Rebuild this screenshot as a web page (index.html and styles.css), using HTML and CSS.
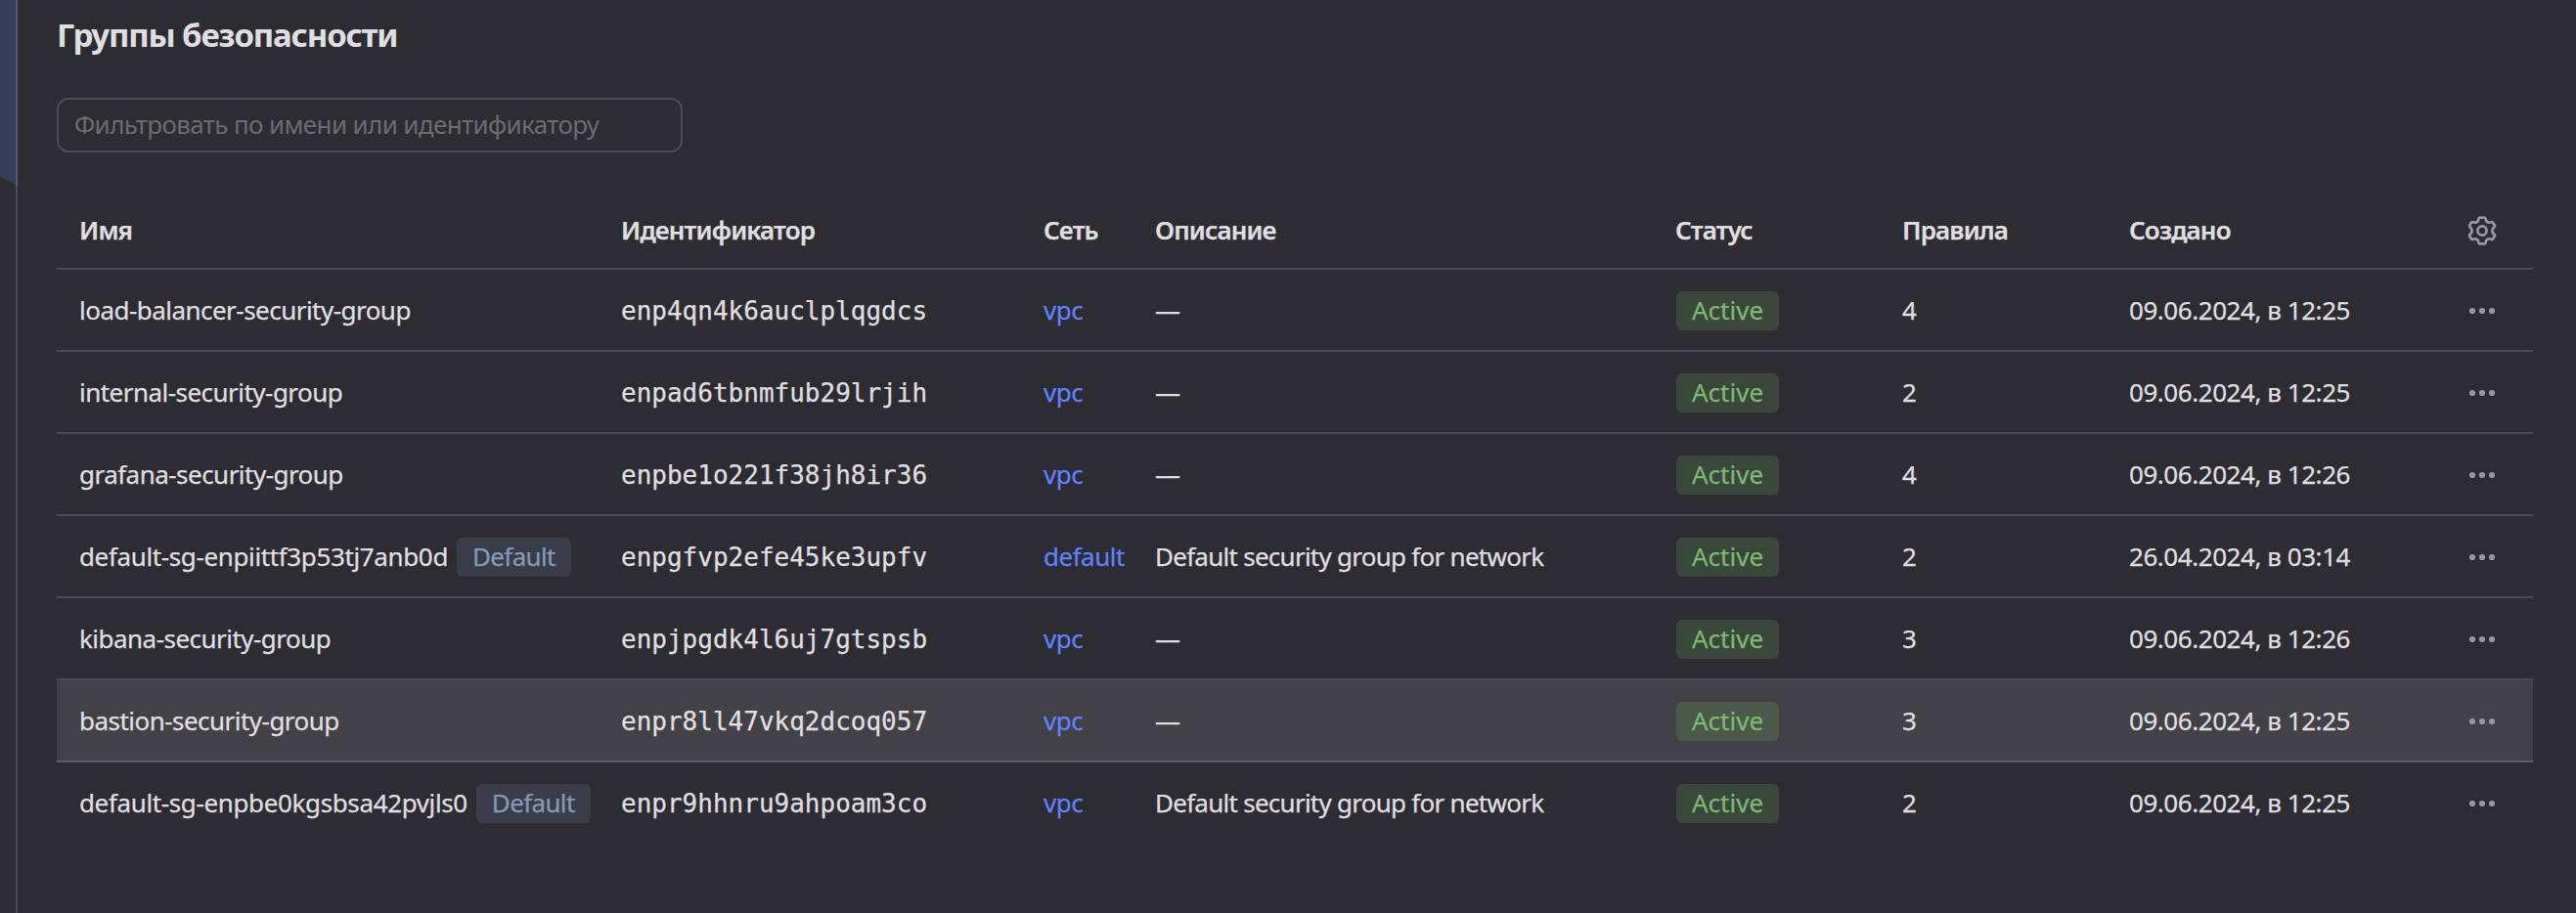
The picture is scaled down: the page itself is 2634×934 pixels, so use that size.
FILE: index.html
```html
<!DOCTYPE html>
<html lang="ru">
<head>
<meta charset="utf-8">
<title>Группы безопасности</title>
<link rel="stylesheet" href="styles.css">
</head>
<body>
<svg class="defs" width="0" height="0">
<symbol id="dots" viewBox="0 0 32 32"><circle cx="6" cy="16" r="3.1"/><circle cx="16" cy="16" r="3.1"/><circle cx="26" cy="16" r="3.1"/></symbol>
</svg>
<div class="app">
<aside class="rail"><svg width="18" height="192" viewBox="0 0 18 192"><path d="M0 0H18V191L9 185L0 181Z" fill="#373e5c"/></svg></aside>
<main class="content">
<h1 class="title">Группы безопасности</h1>
<input class="filter" type="text" placeholder="Фильтровать по имени или идентификатору">
<div class="table">
<div class="row head"><span>Имя</span><span>Идентификатор</span><span>Сеть</span><span>Описание</span><span>Статус</span><span>Правила</span><span>Создано</span>
<svg class="icon" viewBox="0 0 32 32"><g fill="none" stroke="currentColor" stroke-width="2.8" stroke-linejoin="round"><circle cx="16" cy="16" r="4.6"/><path d="M13.9 2.6H18.1Q19.4 2.6 19.6 4C19.9 7 22.4 8.4 25.2 7.3Q26.500 6.700 27.200 7.900L28.600 10.300Q29.300 11.500 28.200 12.400C25.800 14.300 25.800 17.700 28.200 19.600Q29.300 20.500 28.600 21.700L27.200 24.100Q26.500 25.300 25.200 24.700C22.400 23.600 19.900 25 19.600 28Q19.400 29.400 18.100 29.400H13.900Q12.600 29.400 12.400 28C12.100 25 9.600 23.600 6.800 24.700Q5.500 25.300 4.800 24.100L3.400 21.700Q2.700 20.500 3.800 19.600C6.200 17.700 6.200 14.300 3.800 12.400Q2.700 11.500 3.400 10.300L4.800 7.900Q5.500 6.700 6.800 7.300C9.600 8.400 12.100 7 12.400 4Q12.600 2.600 13.900 2.600Z"/></g></svg></div>
<div class="row"><span class="name">load-balancer-security-group</span><span class="mono">enp4qn4k6auclplqgdcs</span><a class="link">vpc</a><span class="desc">—</span><span class="badge active">Active</span><span>4</span><span class="date">09.06.2024, в 12:25</span><svg class="icon"><use href="#dots"/></svg></div>
<div class="row"><span class="name">internal-security-group</span><span class="mono">enpad6tbnmfub29lrjih</span><a class="link">vpc</a><span class="desc">—</span><span class="badge active">Active</span><span>2</span><span class="date">09.06.2024, в 12:25</span><svg class="icon"><use href="#dots"/></svg></div>
<div class="row"><span class="name">grafana-security-group</span><span class="mono">enpbe1o221f38jh8ir36</span><a class="link">vpc</a><span class="desc">—</span><span class="badge active">Active</span><span>4</span><span class="date">09.06.2024, в 12:26</span><svg class="icon"><use href="#dots"/></svg></div>
<div class="row"><span class="name tagged">default-sg-enpiittf3p53tj7anb0d<span class="badge default">Default</span></span><span class="mono">enpgfvp2efe45ke3upfv</span><a class="link">default</a><span class="desc">Default security group for network</span><span class="badge active">Active</span><span>2</span><span class="date">26.04.2024, в 03:14</span><svg class="icon"><use href="#dots"/></svg></div>
<div class="row"><span class="name">kibana-security-group</span><span class="mono">enpjpgdk4l6uj7gtspsb</span><a class="link">vpc</a><span class="desc">—</span><span class="badge active">Active</span><span>3</span><span class="date">09.06.2024, в 12:26</span><svg class="icon"><use href="#dots"/></svg></div>
<div class="row hovered"><span class="name">bastion-security-group</span><span class="mono">enpr8ll47vkq2dcoq057</span><a class="link">vpc</a><span class="desc">—</span><span class="badge active">Active</span><span>3</span><span class="date">09.06.2024, в 12:25</span><svg class="icon"><use href="#dots"/></svg></div>
<div class="row"><span class="name tagged">default-sg-enpbe0kgsbsa42pvjls0<span class="badge default">Default</span></span><span class="mono">enpr9hhnru9ahpoam3co</span><a class="link">vpc</a><span class="desc">Default security group for network</span><span class="badge active">Active</span><span>2</span><span class="date">09.06.2024, в 12:25</span><svg class="icon"><use href="#dots"/></svg></div>
</div>
</main>
</div>
</body>
</html>
```
FILE: styles.css
```css
* { box-sizing: border-box; }
body {
  margin: 0;
  background: #2d2c33;
  color: #e0dfe0;
  font: 26px/40px "Noto Sans", "Open Sans", sans-serif;
  overflow: hidden;
}
.defs { position: absolute; }
.app { display: flex; height: 934px; }
.rail {
  flex: 0 0 18px;
  height: 934px;
  box-shadow: inset -2px 0 rgba(255, 255, 255, .15);
}
.rail svg { display: block; position: relative; z-index: -1; }
.content { flex: 1; padding: 12px 44px 0 40px; }
.title {
  margin: 0;
  height: 48px;
  font-size: 33px;
  line-height: 48px;
  font-weight: 700;
  letter-spacing: -1.15px;
}
.filter {
  display: block;
  width: 640px;
  height: 56px;
  margin: 40px 0;
  padding: 0 16px 2px;
  border: 2px solid #4d4c52;
  border-radius: 12px;
  background: transparent;
  color: inherit;
  font: inherit;
  letter-spacing: -.63px;
}
.filter::placeholder { color: #6c6b70; opacity: 1; }
.row {
  display: grid;
  grid-template-columns: 554px 432px 114px 532px 232px 232px 345px 32px;
  justify-items: start;
  height: 84px;
  padding: 22px 0 0 23px;
  border-bottom: 2px solid rgba(255, 255, 255, .15);
  white-space: nowrap;
  -webkit-text-stroke: .25px currentColor;
}
.row:last-child { border-bottom: 0; }
.row > span:not(.badge), .link { position: relative; top: -1px; }
.row > .mono:not(.badge) { top: 0; }
.head {
  height: 80px;
  padding-top: 20px;
  font-weight: 600;
  letter-spacing: -.85px;
}
.hovered { background-color: #424146; }
.name { letter-spacing: -.53px; }
.tagged { display: flex; letter-spacing: -.37px; }
.tagged .badge { position: relative; top: 1px; margin-left: 9px; letter-spacing: -.65px; }
.mono { font-family: "DejaVu Sans Mono", monospace; }
.link { color: #5f83ff; letter-spacing: -.5px; }
.desc { letter-spacing: -.74px; }
.date { letter-spacing: -.45px; }
.badge {
  height: 40px;
  padding: 0 16px;
  border-radius: 6px;
  line-height: 38px;
}
.active { margin-left: 1px; background: #3a483c; color: #7cb971; }
.hovered .active { background: #4b594b; }
.default { background: #3a3d49; color: #829ab5; }
.icon {
  width: 32px;
  height: 32px;
  margin-top: 4px;
  color: #98979b;
  fill: currentColor;
}
```
